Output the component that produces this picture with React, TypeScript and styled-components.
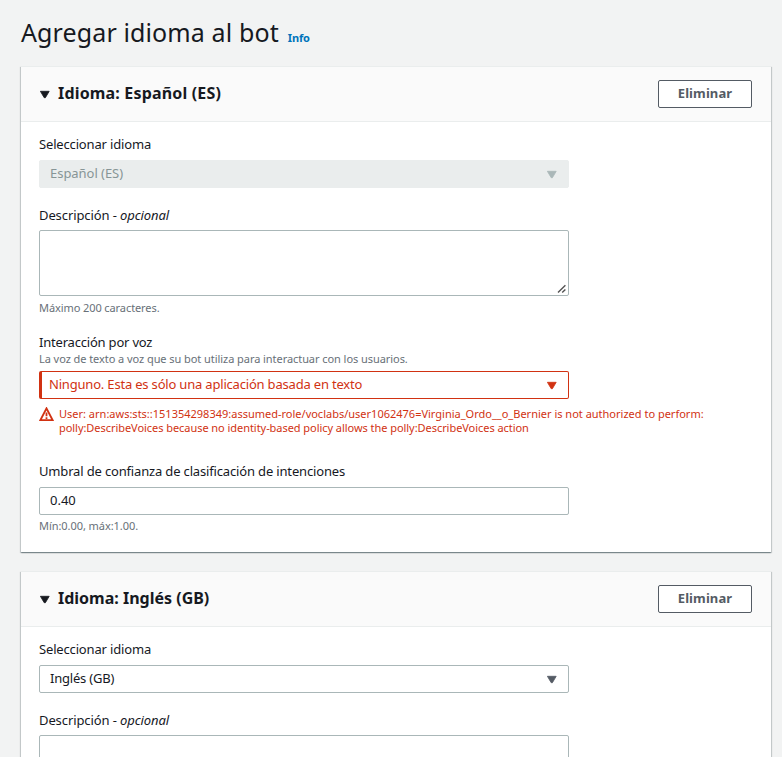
import React from "react";
import styled, { createGlobalStyle, css } from "styled-components";

const GlobalStyle = createGlobalStyle`
  *, *::before, *::after { box-sizing: border-box; }
  body {
    margin: 0;
    background: #f2f3f3;
    color: #16191f;
    font-family: "Noto Sans", "Open Sans", sans-serif;
    font-size: 13px;
    overflow: hidden;
  }
`;

const Page = styled.main`
  height: 757px;
  overflow: hidden;
  padding: 13px 11px 0 21px;
`;

const TitleRow = styled.header`
  display: flex;
  align-items: baseline;
  gap: 9px;
  height: 53px;
`;

const Title = styled.h1`
  margin: 0;
  font-size: 25px;
  line-height: 38px;
  font-weight: 400;
  letter-spacing: 0.12px;
`;

const InfoLink = styled.a`
  color: #0073bb;
  font-size: 11px;
  font-weight: 700;
  letter-spacing: -0.14px;
`;

const Panel = styled.section`
  margin-bottom: 19px;
  background: #fff;
  border-top: 1px solid #eaeded;
  box-shadow:
    0 1px 1px 0 rgba(0, 28, 36, 0.3),
    1px 1px 1px 0 rgba(0, 28, 36, 0.15),
    -1px 1px 1px 0 rgba(0, 28, 36, 0.15);
`;

const PanelHeader = styled.div`
  display: flex;
  align-items: center;
  height: 55px;
  padding: 0 19px 0 18px;
  background: #fafafa;
  border-bottom: 1px solid #eaeded;
`;

const PanelTitle = styled.h2<{ $spacing: number }>`
  flex: 1;
  margin: 0 0 2px 7px;
  font-size: 16px;
  line-height: 22px;
  font-weight: 700;
  letter-spacing: ${(p) => p.$spacing}px;
`;

const RemoveButton = styled.button`
  width: 94px;
  height: 28px;
  padding: 0 0 2px;
  background: #fff;
  border: 1px solid #545b64;
  border-radius: 2px;
  color: #545b64;
  font: 700 13px/20px "Noto Sans", "Open Sans", sans-serif;
  letter-spacing: 0.1px;
`;

const PanelBody = styled.div`
  display: flex;
  flex-direction: column;
  padding: 12px 18px 18px;
`;

const Field = styled.div<{ $gap?: number }>`
  display: flex;
  flex-direction: column;
  margin-bottom: ${(p) => p.$gap ?? 0}px;
`;

const Label = styled.label<{ $spacing?: number; $gap?: number }>`
  line-height: 20px;
  margin-bottom: ${(p) => p.$gap ?? 5}px;
  letter-spacing: ${(p) => p.$spacing ?? -0.16}px;
`;

const Hint = styled.div<{ $spacing?: number }>`
  color: #687078;
  font-size: 11px;
  line-height: 16px;
  letter-spacing: ${(p) => p.$spacing ?? -0.06}px;
`;

const HintAbove = styled(Hint)`
  margin-bottom: 4px;
`;

const HintBelow = styled(Hint)<{ $gap: number }>`
  margin-top: ${(p) => p.$gap}px;
`;

type Tone = "normal" | "disabled" | "error";

const tones = {
  normal: css`
    color: #16191f;
    border: 1px solid #aab7b8;
    padding-left: 10px;
  `,
  disabled: css`
    color: #879596;
    background: #eaeded;
    border: 1px solid #eaeded;
    padding-left: 10px;
  `,
  error: css`
    color: #d13212;
    border: 1px solid #d13212;
    border-left-width: 3px;
    padding-left: 7px;
  `,
};

const arrowColors: Record<Tone, string> = {
  normal: "#545b64",
  disabled: "#aab7b8",
  error: "#d13212",
};

const ControlBox = styled.div<{ $tone: Tone; $spacing?: number }>`
  display: flex;
  align-items: center;
  justify-content: space-between;
  width: 530px;
  height: 28px;
  padding-right: 10px;
  border-radius: 2px;
  letter-spacing: ${(p) => p.$spacing ?? 0}px;
  ${(p) => tones[p.$tone]}
`;

const ControlValue = styled.span`
  line-height: 20px;
  margin-bottom: 2px;
`;

const TextAreaFrame = styled.div`
  position: relative;
  width: 530px;
  height: 66px;
`;

const TextArea = styled.textarea`
  display: block;
  width: 100%;
  height: 100%;
  margin: 0;
  background: #fff;
  border: 1px solid #aab7b8;
  border-radius: 2px;
  resize: none;
`;

const Icon = styled.svg`
  display: block;
  flex: none;
`;

const Grip = styled(Icon)`
  position: absolute;
  right: 2px;
  bottom: 2px;
  pointer-events: none;
`;

const ErrorRow = styled.div`
  display: flex;
  align-items: flex-start;
  gap: 5px;
  margin-top: 8px;
  color: #d13212;
  font-size: 11px;
  line-height: 14px;
`;

const ErrorLine = styled.div<{ $spacing: number }>`
  white-space: nowrap;
  letter-spacing: ${(p) => p.$spacing}px;
`;

const Caret = ({ color }: { color: string }) => (
  <Icon width="12" height="10" viewBox="0 0 12 10">
    <path d="M1.4 2 H10.2 L6.4 8.4 H5.2 Z" transform="translate(0 .3)" fill={color} stroke={color} strokeWidth=".8" strokeLinejoin="round" />
  </Icon>
);

const Warning = () => (
  <Icon width="15" height="15" viewBox="0 0 15 15">
    <path d="M7.5 1.4 L13.6 13.1 H1.4 Z" fill="none" stroke="#d13212" strokeWidth="1.9" strokeLinejoin="miter" />
    <path d="M7.5 5.4 V9.2 M7.5 10.2 V11.9" stroke="#d13212" strokeWidth="1.8" />
  </Icon>
);

const ResizableText = () => (
  <TextAreaFrame>
    <TextArea />
    <Grip width="10" height="10" viewBox="0 0 10 10">
      <path d="M1 8.6 L8.4 1.2 M5.2 8.6 L8.4 5.4" stroke="#545454" strokeWidth="1.4" />
    </Grip>
  </TextAreaFrame>
);

const Select = ({ value, tone, spacing }: { value: string; tone: Tone; spacing?: number }) => (
  <ControlBox $tone={tone} $spacing={spacing}>
    <ControlValue>{value}</ControlValue>
    <Caret color={arrowColors[tone]} />
  </ControlBox>
);

interface Locale {
  name: string;
  configured: boolean;
  titleSpacing: number;
  valueSpacing: number;
}

const locales: Locale[] = [
  { name: "Español (ES)", configured: true, titleSpacing: 0.17, valueSpacing: -0.04 },
  { name: "Inglés (GB)", configured: false, titleSpacing: 0, valueSpacing: -0.2 },
];

const VoiceSettings = () => (
  <>
    <HintBelow $gap={4} $spacing={-0.09}>Máximo 200 caracteres.</HintBelow>
    <Field $gap={16} />
    <Field $gap={26}>
      <Label $gap={-1} $spacing={-0.2}>Interacción por voz</Label>
      <HintAbove>La voz de texto a voz que su bot utiliza para interactuar con los usuarios.</HintAbove>
      <Select value="Ninguno. Esta es sólo una aplicación basada en texto" tone="error" spacing={-0.19} />
      <ErrorRow>
        <Warning />
        <div>
          <ErrorLine $spacing={0}>
            User: arn:aws:sts::151354298349:assumed-role/voclabs/user1062476=Virginia_Ordo__o_Bernier is not authorized to perform:
          </ErrorLine>
          <ErrorLine $spacing={-0.05}>
            polly:DescribeVoices because no identity-based policy allows the polly:DescribeVoices action
          </ErrorLine>
        </div>
      </ErrorRow>
    </Field>
    <Field>
      <Label $gap={6}>Umbral de confianza de clasificación de intenciones</Label>
      <ControlBox $tone="normal">
        <ControlValue>0.40</ControlValue>
      </ControlBox>
      <HintBelow $gap={3}>Mín:0.00, máx:1.00.</HintBelow>
    </Field>
  </>
);

const LocalePanel = ({ locale }: { locale: Locale }) => (
  <Panel>
    <PanelHeader>
      <Caret color="#16191f" />
      <PanelTitle $spacing={locale.titleSpacing}>Idioma: {locale.name}</PanelTitle>
      <RemoveButton>Eliminar</RemoveButton>
    </PanelHeader>
    <PanelBody>
      <Field $gap={17}>
        <Label $gap={6}>Seleccionar idioma</Label>
        <Select value={locale.name} tone={locale.configured ? "disabled" : "normal"} spacing={locale.valueSpacing} />
      </Field>
      <Field>
        <Label $spacing={-0.1}>
          Descripción - <em>opcional</em>
        </Label>
        <ResizableText />
      </Field>
      {locale.configured && <VoiceSettings />}
    </PanelBody>
  </Panel>
);

export default function App() {
  return (
    <>
      <GlobalStyle />
      <Page>
        <TitleRow>
          <Title>Agregar idioma al bot</Title>
          <InfoLink>Info</InfoLink>
        </TitleRow>
        {locales.map((locale) => (
          <LocalePanel key={locale.name} locale={locale} />
        ))}
      </Page>
    </>
  );
}
